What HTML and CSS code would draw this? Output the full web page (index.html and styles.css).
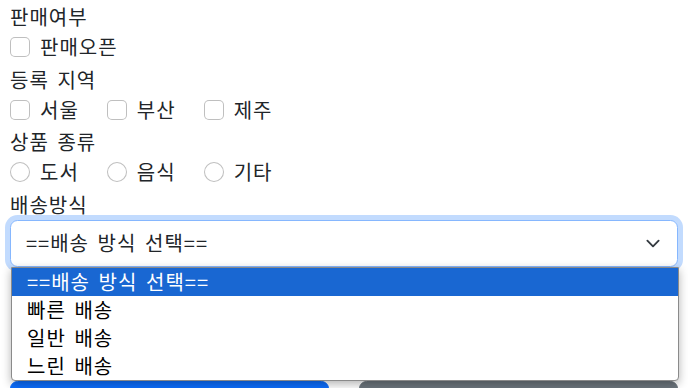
FILE: index.html
```html
<!DOCTYPE html>
<html lang="ko">
<head>
<meta charset="UTF-8">
<meta name="viewport" content="width=device-width, initial-scale=1.0">
<title>상품 등록</title>
<link rel="stylesheet" href="styles.css">
</head>
<body>
<form class="form">
<label class="form-label">판매여부</label>
<div class="check-row">
<label class="check"><input type="checkbox" class="check-input"><span>판매오픈</span></label>
</div>
<label class="form-label">등록 지역</label>
<div class="check-row">
<label class="check"><input type="checkbox" class="check-input"><span>서울</span></label>
<label class="check"><input type="checkbox" class="check-input"><span>부산</span></label>
<label class="check"><input type="checkbox" class="check-input"><span>제주</span></label>
</div>
<label class="form-label">상품 종류</label>
<div class="check-row">
<label class="check"><input type="radio" name="kind" class="check-input radio"><span>도서</span></label>
<label class="check"><input type="radio" name="kind" class="check-input radio"><span>음식</span></label>
<label class="check"><input type="radio" name="kind" class="check-input radio"><span>기타</span></label>
</div>
<label class="form-label">배송방식</label>
<div class="select-wrap">
<div class="select-box">
<span>==배송 방식 선택==</span>
<svg class="chevron" viewBox="0 0 16 16" width="20" height="15"><path d="m2 5 6 6 6-6" fill="none" stroke="#343a40" stroke-width="2" stroke-linecap="round" stroke-linejoin="round"/></svg>
</div>
<ul class="dropdown">
<li class="option selected">==배송 방식 선택==</li>
<li class="option">빠른 배송</li>
<li class="option">일반 배송</li>
<li class="option">느린 배송</li>
</ul>
</div>
<div class="btn-row">
<button type="submit" class="btn btn-primary" aria-label="등록"></button>
<button type="button" class="btn btn-secondary" aria-label="취소"></button>
</div>
</form>
</body>
</html>
```

FILE: styles.css
```css
body {
margin: 0;
font-family: "Noto Sans CJK KR", "Noto Sans", sans-serif;
font-size: 20px;
line-height: 30px;
letter-spacing: 1px;
word-spacing: 2px;
color: #212529;
background: #fff;
}
.form {
padding: 2px 10px 0;
}
.form-label {
display: block;
height: 30px;
}
.check-row {
display: flex;
gap: 28px;
min-height: 30px;
margin-bottom: 2.5px;
}
.check {
display: flex;
align-items: flex-start;
gap: 10px;
}
.check-input {
appearance: none;
width: 20px;
height: 20px;
margin: 5px 0 0;
border: 1px solid rgba(0, 0, 0, .25);
border-radius: 5px;
background: #fff;
}
.check-input.radio {
border-radius: 50%;
}
.select-wrap {
position: relative;
}
.select-box {
display: flex;
align-items: center;
justify-content: space-between;
height: 47.5px;
box-sizing: border-box;
padding: 7.5px 14px 7.5px 15px;
border: 1px solid #86b7fe;
border-radius: 7.5px;
box-shadow: 0 0 0 5px rgba(13, 110, 253, .25);
background: #fff;
}
.dropdown {
position: absolute;
top: 100%;
left: 1px;
right: -1px;
margin: 0;
padding: 0;
list-style: none;
background: #fff;
border: 1px solid #8a8a8a;
border-radius: 0 0 4px 4px;
box-shadow: 0 3px 10px rgba(0, 0, 0, .3);
z-index: 2;
}
.option {
height: 28px;
line-height: 28px;
padding-left: 15px;
color: #000;
}
.option.selected {
background: #1967d2;
color: #fff;
}
.btn-row {
display: grid;
grid-template-columns: 1fr 1fr;
gap: 30px;
margin-top: 114px;
}
.btn {
height: 47.5px;
border: 1px solid transparent;
border-radius: 7.5px;
}
.btn-primary {
background: #0d6efd;
border-color: #0d6efd;
}
.btn-secondary {
background: #6c757d;
border-color: #6c757d;
}
```
